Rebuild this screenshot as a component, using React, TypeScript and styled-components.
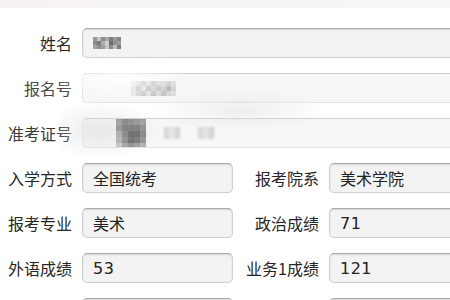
import React from "react";
import styled, {createGlobalStyle} from "styled-components";

const GlobalStyle = createGlobalStyle`
  html, body {
    margin: 0;
    padding: 0;
    background: #fff;
    overflow: hidden;
  }
  body {
    font-family: "Noto Sans CJK SC", "Noto Sans", sans-serif;
    color: #222;
  }
`;

const Page = styled.div`
  position: relative;
  width: 450px;
  height: 300px;
  overflow: hidden;
  background: #fff;
`;

const TopStrip = styled.div`
  height: 8px;
  background: linear-gradient(90deg, #f7f1f1 0%, #f6f4f4 30%, #f6f6f6 100%);
`;

const Form = styled.div`
  display: grid;
  grid-template-columns: 64px 151px 76px 150px;
  column-gap: 10px;
  row-gap: 15px;
  padding: 20px 0 0 8px;
  width: 520px;
`;

const Label = styled.div<{$tone?: string}>`
  height: 30px;
  display: flex;
  align-items: center;
  justify-content: flex-end;
  font-size: 16px;
  line-height: 1;
  white-space: nowrap;
  color: ${p => p.$tone ?? "#262626"};
`;

const Field = styled.div<{$wide?: boolean}>`
  grid-column: ${p => (p.$wide ? "2 / 5" : "auto")};
  height: 30px;
  box-sizing: border-box;
  display: flex;
  align-items: center;
  padding-left: 10px;
  font-size: 16px;
  color: #222;
  background: #f3f3f3;
  border: 1px solid #cfcfcf;
  border-top-color: #a9a9a9;
  border-radius: 5px;
  box-shadow: inset 0 1px 2px rgba(0, 0, 0, 0.12);
  white-space: nowrap;
`;

const Faded = styled(Field)<{$indent: number}>`
  padding-left: ${p => p.$indent}px;
  border-color: #e4e4e4;
  border-top-color: #cfcfcf;
  background: #f7f7f7;
  box-shadow: none;
  gap: 18px;
`;

const Number = styled.span`
  font-family: "DejaVu Sans", "Noto Sans", sans-serif;
  font-size: 16px;
  letter-spacing: 0.5px;
`;

const Mosaic = styled.svg`
  display: block;
  filter: blur(0.6px);
`;

const LightCells = styled.div`
  width: 16px;
  height: 12px;
  background: linear-gradient(90deg, #d4d4d4, #e6e6e6 50%, #cdcdcd);
  filter: blur(1px);
`;

const Smudge = styled.div`
  position: absolute;
  left: 60px;
  top: 60px;
  width: 260px;
  height: 100px;
  pointer-events: none;
  background:
    radial-gradient(ellipse 70px 22px at 60px 18px, rgba(255,255,255,0.85), rgba(255,255,255,0) 100%),
    radial-gradient(ellipse 90px 20px at 180px 50px, rgba(225,225,225,0.6), rgba(255,255,255,0) 100%),
    radial-gradient(ellipse 60px 30px at 40px 70px, rgba(220,220,220,0.55), rgba(255,255,255,0) 100%);
  filter: blur(2px);
`;

type Cell = [number, number, string];

const MosaicBlock: React.FC<{w: number; h: number; size: number; cells: Cell[]}> = ({w, h, size, cells}) => (
  <Mosaic width={w} height={h} viewBox={`0 0 ${w} ${h}`}>
    {cells.map(([x, y, c], i) => (
      <rect key={i} x={x * size} y={y * size} width={size} height={size} fill={c}/>
    ))}
  </Mosaic>
);

const nameCells: Cell[] = [
  [0, 0, "#9a9a9a"], [1, 0, "#c4c4c4"], [2, 0, "#8a8a8a"], [3, 0, "#a8a8a8"], [4, 0, "#7e7e7e"], [5, 0, "#999"], [6, 0, "#888"],
  [0, 1, "#8c8c8c"], [1, 1, "#7a7a7a"], [2, 1, "#b0b0b0"], [3, 1, "#d0d0d0"], [4, 1, "#6f6f6f"], [5, 1, "#8e8e8e"], [6, 1, "#9c9c9c"],
  [0, 2, "#a4a4a4"], [1, 2, "#8f8f8f"], [2, 2, "#9e9e9e"], [3, 2, "#c8c8c8"], [4, 2, "#8a8a8a"], [5, 2, "#bcbcbc"], [6, 2, "#7c7c7c"],
];

const regCells: Cell[] = [
  [0, 0, "#e2e2e2"], [1, 0, "#d0d0d0"], [2, 0, "#c4c4c4"], [3, 0, "#d8d8d8"], [4, 0, "#bdbdbd"], [5, 0, "#cfcfcf"], [6, 0, "#d6d6d6"], [7, 0, "#c9c9c9"], [8, 0, "#dcdcdc"],
  [0, 1, "#d9d9d9"], [1, 1, "#bfbfbf"], [2, 1, "#dadada"], [3, 1, "#b8b8b8"], [4, 1, "#cdcdcd"], [5, 1, "#bdbdbd"], [6, 1, "#cacaca"], [7, 1, "#b5b5b5"], [8, 1, "#d2d2d2"],
  [0, 2, "#e6e6e6"], [1, 2, "#d2d2d2"], [2, 2, "#c6c6c6"], [3, 2, "#dedede"], [4, 2, "#c0c0c0"], [5, 2, "#d9d9d9"], [6, 2, "#c2c2c2"], [7, 2, "#d5d5d5"], [8, 2, "#e0e0e0"],
];

const idCells: Cell[] = [
  [0, 0, "#8a8a8a"], [1, 0, "#6e6e6e"], [2, 0, "#7c7c7c"], [3, 0, "#8c8c8c"], [4, 0, "#9a9a9a"], [5, 0, "#7a7a7a"],
  [0, 1, "#777"], [1, 1, "#5f5f5f"], [2, 1, "#666"], [3, 1, "#6c6c6c"], [4, 1, "#888"], [5, 1, "#999"],
  [0, 2, "#9c9c9c"], [1, 2, "#6a6a6a"], [2, 2, "#505050"], [3, 2, "#5a5a5a"], [4, 2, "#7e7e7e"], [5, 2, "#a0a0a0"],
  [0, 3, "#a6a6a6"], [1, 3, "#7b7b7b"], [2, 3, "#5c5c5c"], [3, 3, "#6d6d6d"], [4, 3, "#8e8e8e"], [5, 3, "#a8a8a8"],
  [0, 4, "#c0c0c0"], [1, 4, "#9a9a9a"], [2, 4, "#888"], [3, 4, "#9b9b9b"], [4, 4, "#b0b0b0"], [5, 4, "#c4c4c4"],
];

type Pair = {label: string; value?: string; number?: boolean};

const rows: [Pair, Pair][] = [
  [{label: "入学方式", value: "全国统考"}, {label: "报考院系", value: "美术学院"}],
  [{label: "报考专业", value: "美术"}, {label: "政治成绩", value: "71", number: true}],
  [{label: "外语成绩", value: "53", number: true}, {label: "业务1成绩", value: "121", number: true}],
  [{label: ""}, {label: ""}],
];

const renderValue = (p: Pair) => (p.number ? <Number>{p.value}</Number> : p.value);

export default function App() {
  return (
    <Page>
      <GlobalStyle/>
      <TopStrip/>
      <Form>
        <Label>姓名</Label>
        <Field $wide>
          <MosaicBlock w={28} h={12} size={4} cells={nameCells}/>
        </Field>

        <Label $tone="#4a4a4a">报名号</Label>
        <Faded $wide $indent={48}>
          <MosaicBlock w={45} h={15} size={5} cells={regCells}/>
        </Faded>

        <Label $tone="#3a3a3a">准考证号</Label>
        <Faded $wide $indent={33}>
          <MosaicBlock w={30} h={28} size={6} cells={idCells}/>
          <LightCells/>
          <LightCells/>
        </Faded>

        {rows.map(([a, b], i) => (
          <React.Fragment key={i}>
            <Label>{a.label}</Label>
            <Field>{renderValue(a)}</Field>
            <Label>{b.label}</Label>
            <Field>{renderValue(b)}</Field>
          </React.Fragment>
        ))}
      </Form>
      <Smudge/>
    </Page>
  );
}
